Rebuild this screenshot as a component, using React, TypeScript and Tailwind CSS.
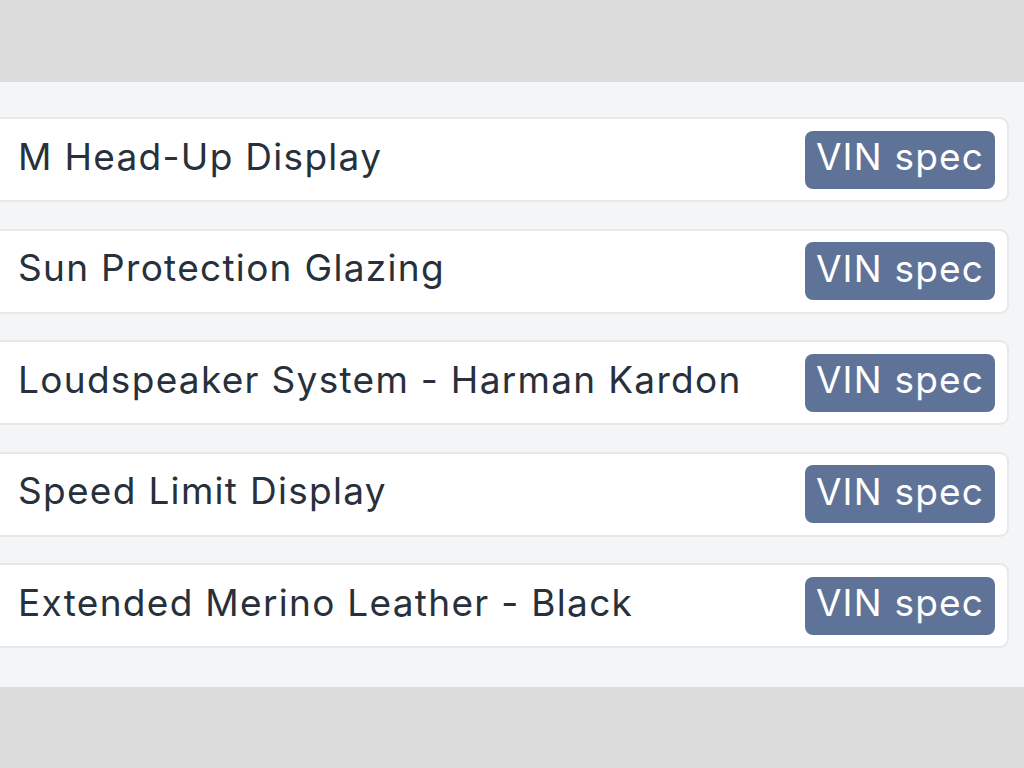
import React from "react";

const items = [
  "M Head-Up Display",
  "Sun Protection Glazing",
  "Loudspeaker System - Harman Kardon",
  "Speed Limit Display",
  "Extended Merino Leather - Black",
];

export default function App() {
  return (
    <div className="w-[1024px] h-[768px] bg-[#dcdcdc] flex flex-col overflow-hidden" style={{ fontFamily: "Inter, 'Noto Sans', sans-serif" }}>
      <div className="h-[82px] shrink-0" />
      <div className="bg-[#f3f5f6] pt-[35px] pb-[39px] flex flex-col gap-[26.5px]">
        {items.map((t) => (
          <div
            key={t}
            className="ml-[-10px] mr-[15px] h-[85px] bg-white border-2 border-[#e6e9eb] rounded-[9px] flex items-center justify-between pl-[26px] pr-[12px]"
          >
            <span className="text-[37px] text-[#27303b] leading-none tracking-[1.3px] pb-[7px]">{t}</span>
            <span className="w-[190px] h-[58px] rounded-[8px] bg-[#5f7399] text-white text-[37px] leading-none tracking-[1.2px] pb-[6px] flex items-center justify-center">
              VIN spec
            </span>
          </div>
        ))}
      </div>
    </div>
  );
}
